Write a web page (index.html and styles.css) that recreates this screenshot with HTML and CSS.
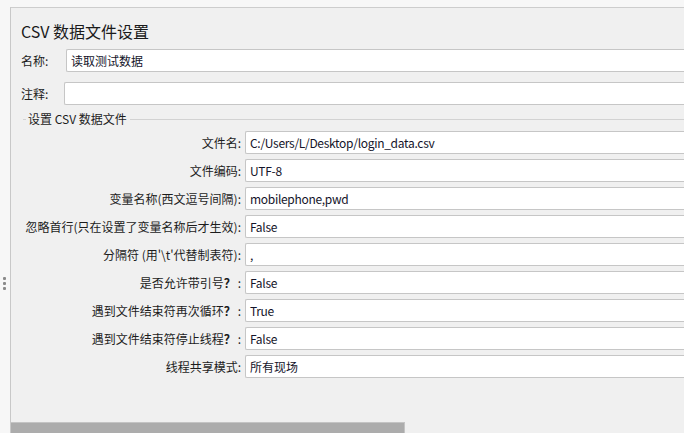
FILE: index.html
```html
<!DOCTYPE html>
<html lang="zh-CN">
<head>
<meta charset="utf-8">
<title>CSV 数据文件设置</title>
<link rel="stylesheet" href="styles.css">
</head>
<body>
<div class="frame">
  <div class="gutter">
    <span class="dot"></span><span class="dot"></span><span class="dot"></span>
  </div>
  <div class="main">
    <h1 class="title">CSV 数据文件设置</h1>
    <div class="line-row name-row">
      <label class="line-label name-label">名称:</label>
      <div class="field">读取测试数据</div>
    </div>
    <div class="line-row comment-row">
      <label class="line-label comment-label">注释:</label>
      <div class="field"></div>
    </div>
    <div class="group">
      <div class="legend"><span class="legend-text">设置 CSV 数据文件</span></div>
      <div class="grid">
        <label class="glabel">文件名:</label><div class="field latin">C:/Users/L/Desktop/login_data.csv</div>
        <label class="glabel">文件编码:</label><div class="field latin">UTF-8</div>
        <label class="glabel">变量名称(西文逗号间隔):</label><div class="field latin">mobilephone,pwd</div>
        <label class="glabel">忽略首行(只在设置了变量名称后才生效):</label><div class="field latin">False</div>
        <label class="glabel">分隔符 (用'\t'代替制表符):</label><div class="field latin">,</div>
        <label class="glabel">是否允许带引号<span class="q">？</span>:</label><div class="field latin">False</div>
        <label class="glabel">遇到文件结束符再次循环<span class="q">？</span>:</label><div class="field latin">True</div>
        <label class="glabel">遇到文件结束符停止线程<span class="q">？</span>:</label><div class="field latin">False</div>
        <label class="glabel">线程共享模式:</label><div class="field">所有现场</div>
      </div>
    </div>
    <div class="spacer"></div>
    <div class="hscroll"><div class="thumb"></div></div>
  </div>
</div>
</body>
</html>
```

FILE: styles.css
```css
html, body {
  margin: 0;
  padding: 0;
}
body {
  width: 684px;
  height: 433px;
  overflow: hidden;
  background: #f7f7f7;
  font-family: "Noto Sans CJK SC", "Noto Sans", sans-serif;
  color: #1c1c1c;
}
.frame {
  display: flex;
  height: 433px;
}
.gutter {
  width: 10px;
  flex: none;
  display: flex;
  flex-direction: column;
  align-items: center;
  padding-top: 277px;
  gap: 2px;
  box-sizing: border-box;
}
.dot {
  width: 3px;
  height: 3px;
  background: #8a8a8a;
  border-radius: 1px;
  margin-left: -2px;
}
.main {
  flex: 1;
  margin-top: 7px;
  border-top: 1px solid #cdcdcd;
  border-left: 1px solid #c8c8c8;
  background: #f0f0f0;
  display: flex;
  flex-direction: column;
  min-width: 0;
}
.title {
  margin: 12px 0 0 10px;
  font-size: 16px;
  font-weight: normal;
  line-height: 22px;
  height: 22px;
  color: #1a1a1a;
}
.line-row {
  display: flex;
  align-items: center;
  height: 23px;
}
.name-row {
  margin-top: 7px;
}
.comment-row {
  margin-top: 10px;
}
.line-label {
  font-size: 12px;
  padding-left: 10px;
  flex: none;
  box-sizing: border-box;
}
.name-label {
  width: 55px;
}
.comment-label {
  width: 53px;
}
.field {
  flex: 1;
  height: 23px;
  box-sizing: border-box;
  background: #fff;
  border: 1px solid #c6c6c6;
  border-right: none;
  border-radius: 2px 0 0 2px;
  padding: 0 4px;
  font-size: 12px;
  line-height: 21px;
  color: #14142a;
  white-space: nowrap;
  overflow: hidden;
}
.latin {
  letter-spacing: -0.3px;
}
.group {
  margin-top: 6px;
  padding-left: 12px;
}
.legend {
  display: flex;
  align-items: center;
  height: 16px;
}
.legend::before {
  content: "";
  width: 3px;
  border-top: 1px solid #d2d2d2;
}
.legend::after {
  content: "";
  flex: 1;
  border-top: 1px solid #d2d2d2;
}
.legend-text {
  font-size: 12px;
  line-height: 16px;
  padding: 0 3px 0 2px;
}
.grid {
  margin-top: 4px;
  margin-left: -12px;
  display: grid;
  grid-template-columns: 230px 1fr;
  column-gap: 4px;
  row-gap: 5px;
}
.glabel {
  font-size: 12px;
  text-align: right;
  line-height: 23px;
  white-space: nowrap;
}
.q {
  font-weight: bold;
  padding-right: 2px;
}
.spacer {
  flex: 1;
}
.hscroll {
  height: 11px;
  flex: none;
}
.thumb {
  width: 394px;
  height: 11px;
  box-sizing: border-box;
  background: #acacac;
  border-top: 1px solid #c4c4c4;
  border-right: 1px solid #c4c4c4;
}
```
